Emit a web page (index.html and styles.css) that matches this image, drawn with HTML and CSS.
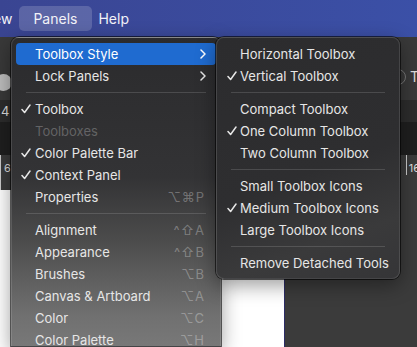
FILE: index.html
```html
<!DOCTYPE html>
<html lang="en">
<head>
    <meta charset="UTF-8">
    <meta name="viewport" content="width=device-width, initial-scale=1.0">
    <title>Panels Menu</title>
    <link rel="stylesheet" href="styles.css">
</head>
<body>

    <div class="menubar">
        <span class="menubar-item view">View</span>
        <span class="menubar-item active">Panels</span>
        <span class="menubar-item">Help</span>
    </div>

    <div class="workspace">
        <div class="toolbar">
            <span class="knob"></span>
            <span class="toolbar-right">
                <span class="ring"></span>
                <span class="tool-t">T</span>
            </span>
        </div>
        <div class="options-bar"><span class="num">4</span></div>
        <div class="tab-bar"></div>
        <div class="ruler">
            <span class="ruler-num left">6</span>
            <span class="ruler-num right">16</span>
        </div>
        <div class="canvas">
            <div class="page"></div>
            <div class="pasteboard"></div>
        </div>
    </div>

    <!-- Panels menu -->
    <div class="menu main-menu">
        <div class="item highlighted">
            <span class="check"></span>
            <span class="label">Toolbox Style</span>
            <svg class="chevron" width="6" height="10" viewBox="0 0 6 10"><path d="M1 1l4 4-4 4" fill="none" stroke="#fff" stroke-width="1.5" stroke-linecap="round" stroke-linejoin="round"/></svg>
        </div>
        <div class="item">
            <span class="check"></span>
            <span class="label">Lock Panels</span>
            <svg class="chevron" width="6" height="10" viewBox="0 0 6 10"><path d="M1 1l4 4-4 4" fill="none" stroke="#e6e6e6" stroke-width="1.5" stroke-linecap="round" stroke-linejoin="round"/></svg>
        </div>
        <div class="sep"></div>
        <div class="item">
            <span class="check"><svg width="10" height="10" viewBox="0 0 10 10"><path d="M1 5.5l2.6 3L9 1" fill="none" stroke="#e6e6e6" stroke-width="1.5" stroke-linecap="round" stroke-linejoin="round"/></svg></span>
            <span class="label">Toolbox</span>
        </div>
        <div class="item disabled">
            <span class="check"></span>
            <span class="label">Toolboxes</span>
        </div>
        <div class="item">
            <span class="check"><svg width="10" height="10" viewBox="0 0 10 10"><path d="M1 5.5l2.6 3L9 1" fill="none" stroke="#e6e6e6" stroke-width="1.5" stroke-linecap="round" stroke-linejoin="round"/></svg></span>
            <span class="label">Color Palette Bar</span>
        </div>
        <div class="item">
            <span class="check"><svg width="10" height="10" viewBox="0 0 10 10"><path d="M1 5.5l2.6 3L9 1" fill="none" stroke="#e6e6e6" stroke-width="1.5" stroke-linecap="round" stroke-linejoin="round"/></svg></span>
            <span class="label">Context Panel</span>
        </div>
        <div class="item">
            <span class="check"></span>
            <span class="label">Properties</span>
            <span class="shortcut">⌥⌘P</span>
        </div>
        <div class="sep"></div>
        <div class="item">
            <span class="check"></span>
            <span class="label">Alignment</span>
            <span class="shortcut">^⇧A</span>
        </div>
        <div class="item">
            <span class="check"></span>
            <span class="label">Appearance</span>
            <span class="shortcut">^⇧B</span>
        </div>
        <div class="item">
            <span class="check"></span>
            <span class="label">Brushes</span>
            <span class="shortcut">⌥B</span>
        </div>
        <div class="item">
            <span class="check"></span>
            <span class="label">Canvas &amp; Artboard</span>
            <span class="shortcut">⌥A</span>
        </div>
        <div class="item">
            <span class="check"></span>
            <span class="label">Color</span>
            <span class="shortcut">⌥C</span>
        </div>
        <div class="item">
            <span class="check"></span>
            <span class="label">Color Palette</span>
            <span class="shortcut">⌥H</span>
        </div>
    </div>

    <!-- Toolbox Style submenu -->
    <div class="menu sub-menu">
        <div class="item">
            <span class="check"></span>
            <span class="label">Horizontal Toolbox</span>
        </div>
        <div class="item">
            <span class="check"><svg width="10" height="10" viewBox="0 0 10 10"><path d="M1 5.5l2.6 3L9 1" fill="none" stroke="#e6e6e6" stroke-width="1.5" stroke-linecap="round" stroke-linejoin="round"/></svg></span>
            <span class="label">Vertical Toolbox</span>
        </div>
        <div class="sep"></div>
        <div class="item">
            <span class="check"></span>
            <span class="label">Compact Toolbox</span>
        </div>
        <div class="item">
            <span class="check"><svg width="10" height="10" viewBox="0 0 10 10"><path d="M1 5.5l2.6 3L9 1" fill="none" stroke="#e6e6e6" stroke-width="1.5" stroke-linecap="round" stroke-linejoin="round"/></svg></span>
            <span class="label">One Column Toolbox</span>
        </div>
        <div class="item">
            <span class="check"></span>
            <span class="label">Two Column Toolbox</span>
        </div>
        <div class="sep"></div>
        <div class="item">
            <span class="check"></span>
            <span class="label">Small Toolbox Icons</span>
        </div>
        <div class="item">
            <span class="check"><svg width="10" height="10" viewBox="0 0 10 10"><path d="M1 5.5l2.6 3L9 1" fill="none" stroke="#e6e6e6" stroke-width="1.5" stroke-linecap="round" stroke-linejoin="round"/></svg></span>
            <span class="label">Medium Toolbox Icons</span>
        </div>
        <div class="item">
            <span class="check"></span>
            <span class="label">Large Toolbox Icons</span>
        </div>
        <div class="sep"></div>
        <div class="item">
            <span class="check"></span>
            <span class="label">Remove Detached Tools</span>
        </div>
    </div>

</body>
</html>
```

FILE: styles.css
```css
body {
    margin: 0;
    width: 417px;
    height: 347px;
    overflow: hidden;
    position: relative;
    font-family: Inter, "Noto Sans", "DejaVu Sans", sans-serif;
    background: #333;
    color: #e6e6e6;
}

/* top menu bar */
.menubar {
    height: 37px;
    display: flex;
    align-items: center;
    background: linear-gradient(90deg, #3a4592, #3b50a7);
    font-size: 14px;
    color: #f2f2f8;
}
.menubar-item {
    padding: 0 6px;
    line-height: 25px;
    border-radius: 5px;
}
.menubar-item.view {
    margin-left: -26px;
    padding-right: 7px;
}
.menubar-item.active {
    background: rgba(255, 255, 255, 0.17);
    padding: 0 15px 0 14px;
}

/* app underneath */
.workspace {
    height: 310px;
    display: flex;
    flex-direction: column;
}
.toolbar {
    height: 63px;
    background: #393939;
    display: flex;
    justify-content: space-between;
    align-items: center;
}
.knob {
    width: 17px;
    height: 17px;
    border-radius: 50%;
    background: #bdbdbd;
    margin-left: -5px;
    margin-top: 28px;
}
.toolbar-right {
    display: flex;
    align-items: center;
    gap: 4px;
    margin-top: 16px;
}
.ring {
    width: 14px;
    height: 14px;
    border: 1.5px solid #777;
    border-radius: 50%;
}
.tool-t {
    font-size: 14px;
    color: #ddd;
    width: 7px;
    overflow: hidden;
}
.options-bar {
    height: 22px;
    background: #2c2c2c;
    display: flex;
    align-items: center;
}
.num {
    font-size: 13px;
    color: #ddd;
    margin-left: 1px;
}
.tab-bar {
    height: 33px;
    background: #1f1f1f;
}
.ruler {
    height: 35px;
    background: #3b3b3b;
    display: flex;
    justify-content: space-between;
    align-items: flex-start;
    font-size: 11px;
    color: #ddd;
    border-left: 1px solid #ccc;
}
.ruler-num {
    padding-top: 6px;
}
.ruler-num.left {
    margin-left: 3px;
}
.ruler-num.right {
    border-left: 1px solid #ccc;
    padding-left: 2px;
    margin-right: -3px;
}
.canvas {
    flex: 1;
    display: flex;
}
.page {
    width: 284px;
    background: #fff;
    border-right: 1px solid #2c2c66;
}
.pasteboard {
    flex: 1;
    background: #3b3b3b;
}

/* menus */
.menu {
    position: absolute;
    box-sizing: border-box;
    padding: 5px 4px 4px;
    border-radius: 8px;
    border: 1px solid rgba(255, 255, 255, 0.12);
    box-shadow: 0 0 0 1px rgba(0, 0, 0, 0.6), 0 6px 20px rgba(0, 0, 0, 0.4);
    font-size: 13px;
    overflow: hidden;
}
.main-menu {
    left: 11px;
    top: 37px;
    width: 210px;
    height: 310px;
    border-bottom-left-radius: 0;
    border-bottom-right-radius: 0;
    background: linear-gradient(180deg, #2b2b2d 0%, #333335 45%, #4c4c4c 66%, #707070 90%, #787878 100%);
}
.sub-menu {
    left: 216px;
    top: 37px;
    width: 184px;
    height: 242px;
    background: linear-gradient(160deg, #2c2c2e 0%, #2e2e30 55%, #3a3a3b 80%, #353537 100%);
}
.item {
    height: 22px;
    display: flex;
    align-items: center;
    border-radius: 4px;
    padding-right: 11px;
    white-space: nowrap;
}
.item.highlighted {
    background: #1f6bd0;
    color: #fff;
}
.item.disabled {
    color: rgba(255, 255, 255, 0.25);
}
.check {
    box-sizing: border-box;
    width: 19px;
    padding-left: 5px;
    display: flex;
    align-items: center;
    flex-shrink: 0;
}
.sub-menu .check {
    padding-left: 6px;
}
.label {
    flex: 1;
}
.chevron {
    margin-right: -1px;
}
.shortcut {
    color: rgba(255, 255, 255, 0.3);
    letter-spacing: 1px;
    font-family: Inter, "DejaVu Sans", sans-serif;
    font-size: 13px;
}
.sep {
    height: 1px;
    margin: 5px 10px 5px 10px;
    background: rgba(255, 255, 255, 0.14);
}
```
